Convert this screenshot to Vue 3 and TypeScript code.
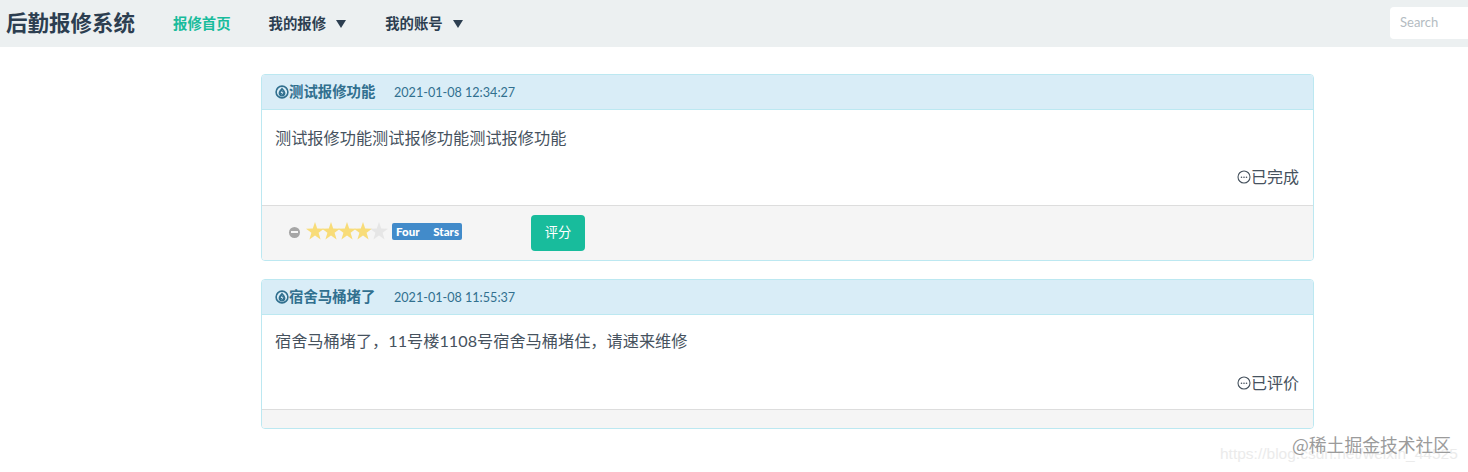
<script setup lang="ts">
interface Ticket {
  title: string
  time: string
  content: string
  status: string
  rated: boolean
}
const tickets: Ticket[] = [
  { title: '测试报修功能', time: '2021-01-08 12:34:27', content: '测试报修功能测试报修功能测试报修功能', status: '已完成', rated: true },
  { title: '宿舍马桶堵了', time: '2021-01-08 11:55:37', content: '宿舍马桶堵了，11号楼1108号宿舍马桶堵住，请速来维修', status: '已评价', rated: false },
]
const stars = [1, 1, 1, 1, 0]
</script>

<template>
  <div class="page">
    <nav class="navbar">
      <span class="brand">后勤报修系统</span>
      <a class="nav-item active first">报修首页</a>
      <a class="nav-item mine">我的报修<i class="caret"></i></a>
      <a class="nav-item account">我的账号<i class="caret"></i></a>
      <input class="search" placeholder="Search" />
    </nav>
    <main class="list">
      <section v-for="t in tickets" :key="t.time" class="panel">
        <header class="head">
          <svg class="drop" viewBox="0 0 14 14" width="14" height="14">
            <circle cx="7" cy="7" r="5.9" fill="none" stroke="#31708f" stroke-width="1.6" />
            <path d="M7 2.4 C8.6 4.4 10.4 6 10.4 8 A3.4 3.4 0 0 1 3.6 8 C3.6 6 5.4 4.4 7 2.4Z" fill="#31708f" />
            <path d="M7.6 4.8 L5.6 8 H7.1 L6.4 10.4 L8.5 7.2 H7 Z" fill="#d9edf7" />
          </svg>
          <strong class="title">{{ t.title }}</strong>
          <span class="time">{{ t.time }}</span>
        </header>
        <div class="body" :class="{ compact: !t.rated }">
          <p class="content">{{ t.content }}</p>
          <div class="status">
            <svg viewBox="0 0 14 14" width="14" height="14">
              <circle cx="7" cy="7" r="6" fill="none" stroke="#46525e" stroke-width="1.1" />
              <circle cx="4.5" cy="7.3" r=".8" fill="#46525e" />
              <circle cx="7" cy="7.3" r=".8" fill="#46525e" />
              <circle cx="9.5" cy="7.3" r=".8" fill="#46525e" />
            </svg>
            <span>{{ t.status }}</span>
          </div>
        </div>
        <footer class="foot" :class="{ empty: !t.rated }">
          <template v-if="t.rated">
            <span class="minus"></span>
            <span class="stars">
              <svg v-for="(s, i) in stars" :key="i" viewBox="0 0 20 20" width="20" height="20" class="star">
                <path d="M10 1 L12.2 7.4 L19 7.7 L13.6 11.8 L15.6 18.4 L10 14.6 L4.4 18.4 L6.4 11.8 L1 7.7 L7.8 7.4 Z" :fill="s ? '#f8dc78' : '#e6e6e6'" />
              </svg>
            </span>
            <span class="caption"><span>Four</span><span>Stars</span></span>
            <button class="rate">评分</button>
          </template>
        </footer>
      </section>
    </main>
    <div class="mark-back">https://blog.csdn.net/weixin_44525</div>
    <div class="mark-front">@稀土掘金技术社区</div>
  </div>
</template>

<style>
html, body { margin: 0; background: #fff; }
</style>

<style scoped>
.page {
  position: relative;
  width: 1468px;
  height: 472px;
  overflow: hidden;
  background: #fff;
  font-family: Lato, "Noto Sans CJK SC", sans-serif;
  color: #2c3e50;
}
.navbar {
  display: flex;
  align-items: center;
  height: 47px;
  padding: 0 0 2px 6px;
  background: #ecf0f1;
  box-sizing: border-box;
}
.brand {
  width: 131px;
  margin-bottom: 2px;
  font-size: 21.5px;
  font-weight: 700;
  color: #2c3e50;
  white-space: nowrap;
}
.nav-item {
  font-size: 14.4px;
  font-weight: 700;
  color: #2c3e50;
  white-space: nowrap;
  display: flex;
  align-items: center;
}
.nav-item.active { color: #18bc9c; }
.first { margin-left: 36px; }
.mine { margin-left: 38px; }
.account { margin-left: 39px; }
.caret {
  display: inline-block;
  margin-left: 10px;
  margin-top: 2px;
  border-left: 5.5px solid transparent;
  border-right: 5.5px solid transparent;
  border-top: 8px solid #2c3e50;
}
.search {
  width: 90px;
  height: 32px;
  margin: 0 -12px -1px auto;
  padding: 0 10px 2px;
  border: 0;
  border-radius: 4px 0 0 4px;
  box-sizing: border-box;
  background: #fff;
  font: 13px Lato, sans-serif;
}
.search::placeholder { color: #b4bcc2; opacity: 1; }
.list {
  display: flex;
  flex-direction: column;
  gap: 18px;
  width: 1053px;
  margin: 27px 0 0 261px;
}
.panel {
  border: 1px solid #bce8f1;
  border-radius: 4px;
  overflow: hidden;
  box-sizing: border-box;
}
.head {
  display: flex;
  align-items: center;
  height: 34px;
  padding-left: 13px;
  background: #d9edf7;
  border-bottom: 1px solid #bce8f1;
  color: #31708f;
  box-sizing: content-box;
}
.drop { flex: none; }
.title { width: 87px; font-size: 14.4px; line-height: 18px; margin: -1px 18px 0 0; font-weight: 700; white-space: nowrap; }
.time { font-size: 12.6px; }
.body {
  display: flex;
  flex-direction: column;
  height: 95px;
  padding: 18px 14px 0 13px;
  box-sizing: border-box;
}
.body.compact { height: 94px; padding-top: 16px; }
.content {
  margin: 0;
  font-size: 16.2px;
  line-height: 20px;
  color: #46525e;
}
.status {
  display: flex;
  align-items: center;
  justify-content: flex-end;
  margin-top: 19px;
  font-size: 16px;
  line-height: 20px;
  color: #46525e;
}
.compact .status { margin-top: 22px; }
.foot {
  display: flex;
  align-items: center;
  height: 55px;
  padding-left: 27px;
  background: #f5f5f5;
  border-top: 1px solid #ddd;
  box-sizing: border-box;
}
.foot.empty { height: 19px; }
.minus {
  position: relative;
  width: 11px;
  height: 11px;
  margin-top: -2px;
  border-radius: 50%;
  background: #a6a6a6;
}
.minus::after {
  content: "";
  position: absolute;
  left: 2px;
  right: 2px;
  top: 4.5px;
  height: 2px;
  background: #f5f5f5;
}
.stars { display: flex; margin: -4px 0 0 5px; }
.star { width: 20px; height: 20px; margin-right: -4px; }
.caption {
  display: flex;
  justify-content: space-between;
  margin: -4px 0 0 7px;
  width: 70px;
  height: 17px;
  line-height: 17px;
  box-sizing: border-box;
  padding: 0 3px 0 4px;
  border-radius: 2px;
  background: #428bca;
  color: #fff;
  font-size: 11.5px;
  font-weight: 900;
  white-space: nowrap;
}
.rate {
  width: 54px;
  height: 36px;
  margin-left: 69px;
  padding: 0 0 3px;
  border: 0;
  border-radius: 4px;
  background: #18bc9c;
  color: #fff;
  font: 13.3px Lato, "Noto Sans CJK SC", sans-serif;
}
.mark-back {
  position: absolute;
  left: 1220px;
  top: 445px;
  font: 15.5px "Liberation Sans", sans-serif;
  color: #ebebeb;
  white-space: nowrap;
}
.mark-front {
  position: absolute;
  left: 1292px;
  top: 431px;
  font: 17.8px "Noto Sans CJK SC", sans-serif;
  color: #9b9b9b;
  white-space: nowrap;
}
</style>
